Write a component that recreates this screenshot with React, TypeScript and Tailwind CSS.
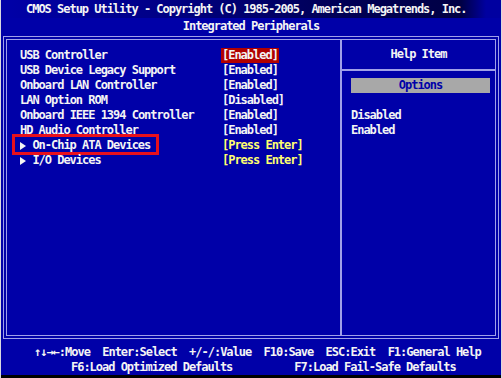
import React from "react";

const rows = [
  { label: "USB Controller", value: "[Enabled]", active: true },
  { label: "USB Device Legacy Support", value: "[Enabled]" },
  { label: "Onboard LAN Controller", value: "[Enabled]" },
  { label: "LAN Option ROM", value: "[Disabled]" },
  { label: "Onboard IEEE 1394 Controller", value: "[Enabled]" },
  { label: "HD Audio Controller", value: "[Enabled]" },
  { label: "On-Chip ATA Devices", value: "[Press Enter]", sub: true, marked: true },
  { label: "I/O Devices", value: "[Press Enter]", sub: true },
];

const Arrow = () => (
  <span className="inline-flex w-[12.4px] items-center">
    <svg width="6" height="8" viewBox="0 0 6 8">
      <path d="M0 0 L6 4 L0 8 Z" fill="#f4f4f4" />
    </svg>
  </span>
);

const App = () => {
  return (
    <div
      className="w-[502px] h-[378px] flex flex-col bg-[#0000a8] text-[#f4f4f4] border-x border-[#d8d8e0] overflow-hidden font-bold text-[12px] tracking-[-1.02px] leading-[15px]"
      style={{ fontFamily: '"DejaVu Sans Mono", "Liberation Mono", monospace' }}
    >
      <div className="h-[18px] pl-[25px] flex items-center whitespace-pre bg-[linear-gradient(90deg,#0000a8_0%,#000088_30%,#000058_65%,#000044_92%,#0000a0_97%)]">
        CMOS Setup Utility - Copyright (C) 1985-2005, American Megatrends, Inc.
      </div>
      <div className="h-[17px] flex items-center justify-center">
        Integrated Peripherals
      </div>
      <div className="mt-[1px] mx-[2px] h-[303px] border-[4px] border-double border-[#a0a0e8] flex">
        {/* left list */}
        <div className="w-[333px] pt-[8px] pl-[13px]">
          {rows.map((r) => (
            <div key={r.label} className="relative flex h-[15px] items-center whitespace-pre">
              <div className="w-[202px] flex">
                {r.sub && <Arrow />}
                {r.label}
              </div>
              <span
                className={
                  r.active
                    ? "bg-[#b00000] px-[1px] -ml-[1px]"
                    : r.sub
                    ? "text-[#ffff70]"
                    : ""
                }
              >
                {r.value}
              </span>
              {r.marked && (
                <div className="absolute left-[-8px] top-[-4px] w-[147px] h-[21px] border-[3px] border-[#e8101c]" />
              )}
            </div>
          ))}
        </div>
        <div className="w-[2px] bg-[#a0a0e8]" />
        {/* help panel */}
        <div className="flex-1 flex flex-col">
          <div className="h-[29px] flex items-center justify-center">Help Item</div>
          <div className="h-[2px] bg-[#a0a0e8]" />
          <div className="mt-[7px] ml-[9px] mr-[5px] h-[15px] bg-[#a8a8a8] text-[#0000a8] flex items-center justify-center">
            Options
          </div>
          <div className="mt-[15px] pl-[9px]">
            <div className="h-[15px] flex items-center">Disabled</div>
            <div className="h-[15px] flex items-center">Enabled</div>
          </div>
        </div>
      </div>
      <div className="pt-[6px] whitespace-pre">
        <div className="h-[15px] pl-[33px] flex items-center">
          ↑↓→←:Move  Enter:Select  +/-/:Value  F10:Save  ESC:Exit  F1:General Help
        </div>
        <div className="h-[15px] pl-[70px] flex items-center">
          F6:Load Optimized Defaults          F7:Load Fail-Safe Defaults
        </div>
      </div>
      <div className="flex-1 bg-black" />
    </div>
  );
};

export default App;
